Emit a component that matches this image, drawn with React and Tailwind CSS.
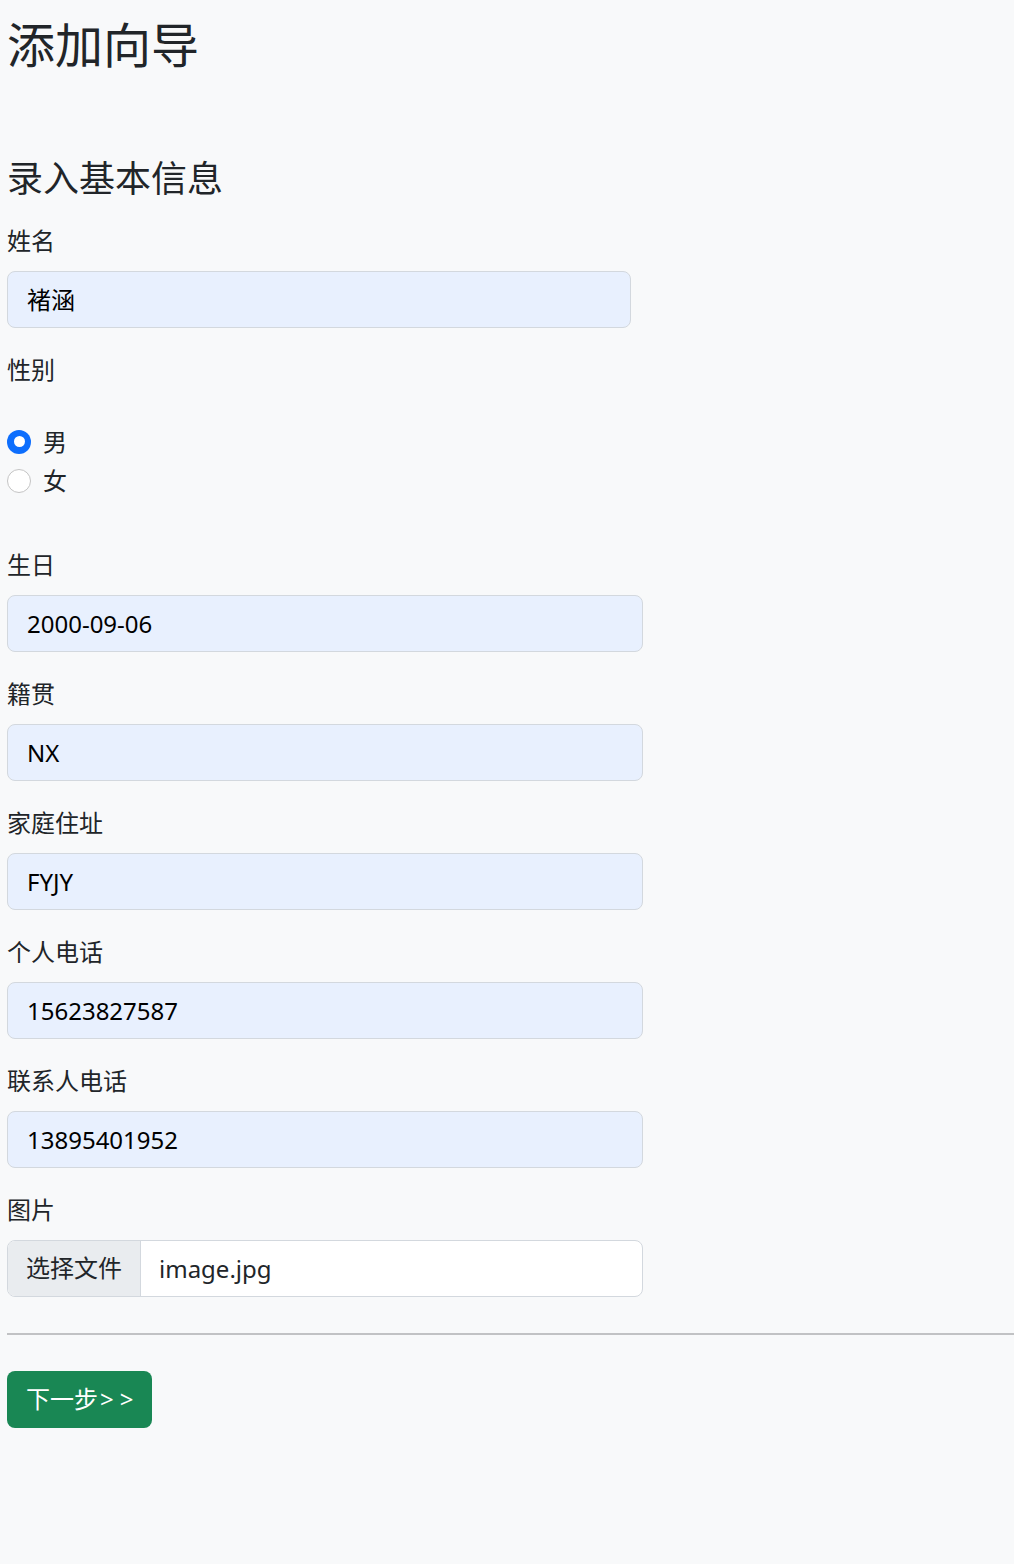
const font = { fontFamily: '"Noto Sans", "Noto Sans CJK SC", sans-serif' };

const Field = ({ label, value, width = 'w-[636px]' }) => (
    <div className="mb-[24px]">
        <label className="block text-[24px] leading-[36px] mb-[12px]">{label}</label>
        <div className={`${width} h-[57px] flex items-center pt-[1px] px-[19px] bg-[#e8f0fe] border border-[#d3d8de] rounded-[8px] text-[24px] text-black`}>
            {value}
        </div>
    </div>
);

const Radio = ({ checked, label }) => (
    <div className="flex items-center h-[36px] mb-[3px] gap-[12px]">
        {checked ? (
            <span className="w-[24px] h-[24px] rounded-full bg-[#0d6efd] flex items-center justify-center">
                <span className="w-[11px] h-[11px] rounded-full bg-white" />
            </span>
        ) : (
            <span className="w-[24px] h-[24px] rounded-full bg-white border border-[#c4c4c4]" />
        )}
        <span className="text-[24px] leading-[36px]">{label}</span>
    </div>
);

export default function App() {
    return (
        <div className="min-h-[1564px] bg-[#f8f9fa] pl-[7px] text-[#212529]" style={font}>
            <h1 className="pt-[16px] text-[48px] leading-[1.2] font-normal">添加向导</h1>
            <h2 className="mt-[83px] mb-[23px] text-[36px] leading-[1.2] font-normal">录入基本信息</h2>

            <Field label="姓名" value="褚涵" width="w-[624px]" />

            <div>
                <label className="block text-[24px] leading-[36px]">性别</label>
                <div className="mt-[36px]">
                    <Radio checked label="男" />
                    <Radio label="女" />
                </div>
            </div>

            <div className="mt-[48px]">
                <Field label="生日" value="2000-09-06" />
                <Field label="籍贯" value="NX" />
                <Field label="家庭住址" value="FYJY" />
                <Field label="个人电话" value="15623827587" />
                <Field label="联系人电话" value="13895401952" />
            </div>

            <div>
                <label className="block text-[24px] leading-[36px] mb-[12px]">图片</label>
                <div className="w-[636px] h-[57px] flex bg-white border border-[#d3d8de] rounded-[8px] overflow-hidden text-[24px]">
                    <span className="flex items-center px-[18px] bg-[#e9ecef] border-r border-[#d3d8de]">选择文件</span>
                    <span className="flex items-center pt-[1px] pl-[18px]">image.jpg</span>
                </div>
            </div>

            <hr className="mt-[36px] border-0 h-[2px] bg-[#c1c2c4]" />

            <button className="mt-[36px] h-[57px] pl-[19px] pr-[13px] bg-[#198754] text-white text-[24px] rounded-[8px]">
                下一步<span className="ml-[2px] tracking-[6px]">&gt;&gt;</span>
            </button>
        </div>
    );
}
